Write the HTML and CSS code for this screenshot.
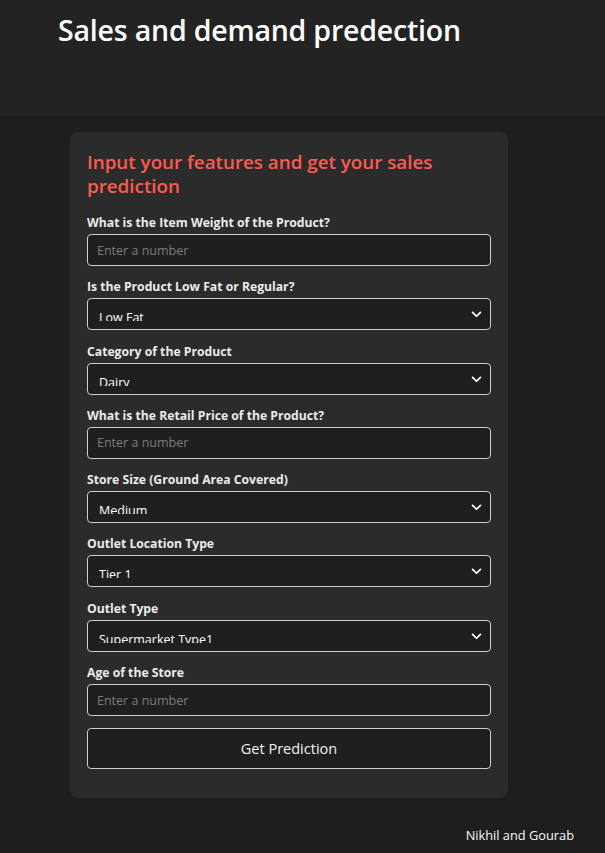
FILE: index.html
```html
<!DOCTYPE html>
<html lang="en">
<head>
<meta charset="utf-8">
<title>Sales and demand predection</title>
<link rel="stylesheet" href="styles.css">
</head>
<body>
<header class="top">
  <h1 class="title">Sales and demand predection</h1>
</header>
<main class="main">
  <form class="card">
    <h2 class="card-title">Input your features and get your sales prediction</h2>

    <div class="field">
      <label class="label">What is the Item Weight of the Product?</label>
      <div class="input"><span class="placeholder">Enter a number</span></div>
    </div>

    <div class="field">
      <label class="label">Is the Product Low Fat or Regular?</label>
      <div class="input select"><span class="value">Low Fat</span><svg class="chev" viewBox="0 0 12 8" width="11" height="7"><path d="M1.5 1.5 6 6l4.5-4.5" fill="none" stroke="#fff" stroke-width="2" stroke-linecap="round" stroke-linejoin="round"/></svg></div>
    </div>

    <div class="field">
      <label class="label">Category of the Product</label>
      <div class="input select"><span class="value">Dairy</span><svg class="chev" viewBox="0 0 12 8" width="11" height="7"><path d="M1.5 1.5 6 6l4.5-4.5" fill="none" stroke="#fff" stroke-width="2" stroke-linecap="round" stroke-linejoin="round"/></svg></div>
    </div>

    <div class="field">
      <label class="label">What is the Retail Price of the Product?</label>
      <div class="input"><span class="placeholder">Enter a number</span></div>
    </div>

    <div class="field">
      <label class="label">Store Size (Ground Area Covered)</label>
      <div class="input select"><span class="value">Medium</span><svg class="chev" viewBox="0 0 12 8" width="11" height="7"><path d="M1.5 1.5 6 6l4.5-4.5" fill="none" stroke="#fff" stroke-width="2" stroke-linecap="round" stroke-linejoin="round"/></svg></div>
    </div>

    <div class="field">
      <label class="label">Outlet Location Type</label>
      <div class="input select"><span class="value">Tier 1</span><svg class="chev" viewBox="0 0 12 8" width="11" height="7"><path d="M1.5 1.5 6 6l4.5-4.5" fill="none" stroke="#fff" stroke-width="2" stroke-linecap="round" stroke-linejoin="round"/></svg></div>
    </div>

    <div class="field">
      <label class="label">Outlet Type</label>
      <div class="input select"><span class="value">Supermarket Type1</span><svg class="chev" viewBox="0 0 12 8" width="11" height="7"><path d="M1.5 1.5 6 6l4.5-4.5" fill="none" stroke="#fff" stroke-width="2" stroke-linecap="round" stroke-linejoin="round"/></svg></div>
    </div>

    <div class="field">
      <label class="label">Age of the Store</label>
      <div class="input"><span class="placeholder">Enter a number</span></div>
    </div>

    <div class="button">Get Prediction</div>
  </form>
</main>
<footer class="footer">Nikhil and Gourab</footer>
</body>
</html>
```

FILE: styles.css
```css
* { box-sizing: border-box; }
html, body { margin: 0; padding: 0; }
body {
  background: #1e1e1e;
  color: #fafafa;
  font-family: "Open Sans", "Noto Sans", sans-serif;
  min-height: 853px;
}
.top {
  background: #232323;
  height: 116px;
  padding: 10px 58px 0;
}
.title {
  margin: 0;
  font-size: 28.5px;
  font-weight: 600;
  line-height: 40px;
  color: #ffffff;
  letter-spacing: -0.2px;
}
.main {
  padding: 16px 0 0 70px;
}
.card {
  width: 438px;
  background: #2b2b2b;
  border-radius: 8px;
  padding: 18px 17px 29px;
  display: flex;
  flex-direction: column;
}
.card-title {
  margin: 0 0 16px;
  font-size: 18.8px;
  font-weight: 600;
  line-height: 24px;
  color: #ff5a50;
}
.field {
  display: flex;
  flex-direction: column;
  gap: 3px;
  margin-bottom: 12.3px;
}
.label {
  font-size: 12.2px;
  font-weight: 700;
  line-height: 17px;
  color: #ececec;
}
.input {
  height: 32px;
  border: 1px solid #cfcfcf;
  border-radius: 4px;
  background: #1f1f1f;
  display: flex;
  align-items: center;
  padding: 0 9px;
}
.placeholder {
  font-size: 12.5px;
  color: #7c7c7c;
}
.select {
  align-items: flex-start;
  padding: 0 8px 0 11px;
}
.value {
  flex: 1;
  height: 22px;
  overflow: hidden;
  padding-top: 11px;
  font-size: 12.5px;
  line-height: 16px;
  color: #ffffff;
}
.chev {
  margin-top: 12px;
}
.button {
  height: 41px;
  border: 1px solid #cfcfcf;
  border-radius: 4px;
  background: #1f1f1f;
  display: flex;
  align-items: center;
  justify-content: center;
  font-size: 14.5px;
  color: #f2f2f2;
}
.footer {
  display: flex;
  justify-content: flex-end;
  padding: 28px 31px 0 0;
  font-size: 12.8px;
  line-height: 18px;
}
```
